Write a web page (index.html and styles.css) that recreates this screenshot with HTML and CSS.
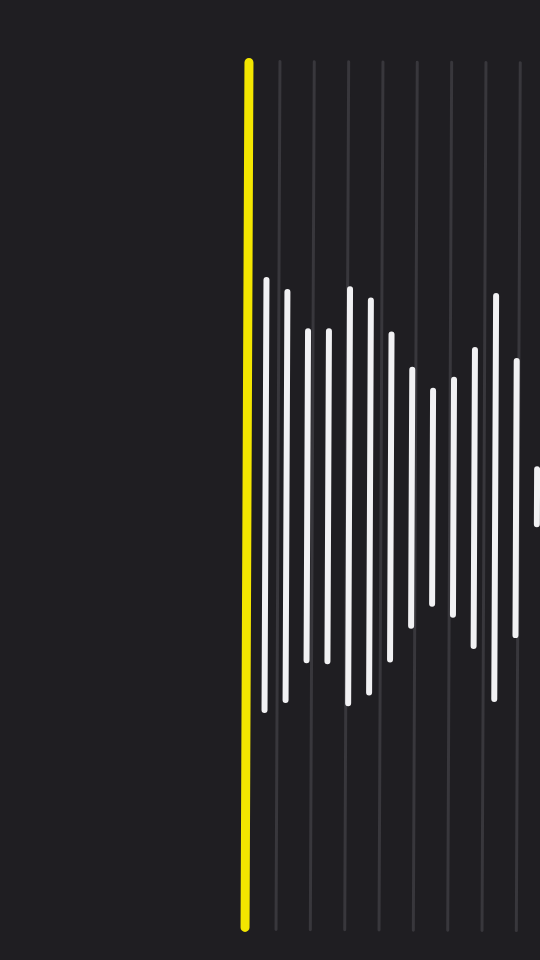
FILE: index.html
```html
<!DOCTYPE html>
<html lang="en">
<head>
<meta charset="utf-8">
<title>Waveform</title>
<link rel="stylesheet" href="styles.css">
</head>
<body>
<main class="screen">
  <svg class="wave" viewBox="0 0 540 960" width="540" height="960" aria-hidden="true">
    <g transform="rotate(0.26 270 495)">
      <g class="grid">
        <line x1="278" y1="61.5" x2="278" y2="929.5"/>
        <line x1="312.3" y1="61.5" x2="312.3" y2="929.5"/>
        <line x1="346.7" y1="61.5" x2="346.7" y2="929.5"/>
        <line x1="381" y1="61.5" x2="381" y2="929.5"/>
        <line x1="415.3" y1="61.5" x2="415.3" y2="929.5"/>
        <line x1="449.7" y1="61.5" x2="449.7" y2="929.5"/>
        <line x1="484" y1="61.5" x2="484" y2="929.5"/>
        <line x1="518.3" y1="61.5" x2="518.3" y2="929.5"/>
      </g>
      <g class="bars">
        <line x1="265.5" y1="280" x2="265.5" y2="710"/>
        <line x1="286.5" y1="292" x2="286.5" y2="700"/>
        <line x1="307.3" y1="331" x2="307.3" y2="660"/>
        <line x1="328.2" y1="331" x2="328.2" y2="661"/>
        <line x1="349.1" y1="289" x2="349.1" y2="703"/>
        <line x1="370" y1="300" x2="370" y2="692"/>
        <line x1="390.8" y1="334" x2="390.8" y2="659"/>
        <line x1="411.7" y1="369" x2="411.7" y2="625"/>
        <line x1="432.6" y1="390" x2="432.6" y2="603"/>
        <line x1="453.5" y1="379" x2="453.5" y2="614"/>
        <line x1="474.3" y1="349" x2="474.3" y2="645"/>
        <line x1="495.2" y1="295" x2="495.2" y2="698"/>
        <line x1="516.1" y1="360" x2="516.1" y2="634"/>
        <line x1="537" y1="468" x2="537" y2="523"/>
      </g>
      <line class="playhead" x1="247" y1="62.5" x2="247" y2="927.5"/>
    </g>
  </svg>
</main>
</body>
</html>
```
FILE: styles.css
```css
html, body {
  margin: 0;
  padding: 0;
  background: #1f1e22;
}

.screen {
  width: 540px;
  height: 960px;
  overflow: hidden;
  background: #1f1e22;
  font-family: "Liberation Sans", Arial, sans-serif;
}

.wave {
  display: block;
}

.grid line {
  stroke: #38373c;
  stroke-width: 3;
  stroke-linecap: round;
}

.bars line {
  stroke: #f1f1f3;
  stroke-width: 6;
  stroke-linecap: round;
}

.playhead {
  stroke: #f3e600;
  stroke-width: 9;
  stroke-linecap: round;
}
```
